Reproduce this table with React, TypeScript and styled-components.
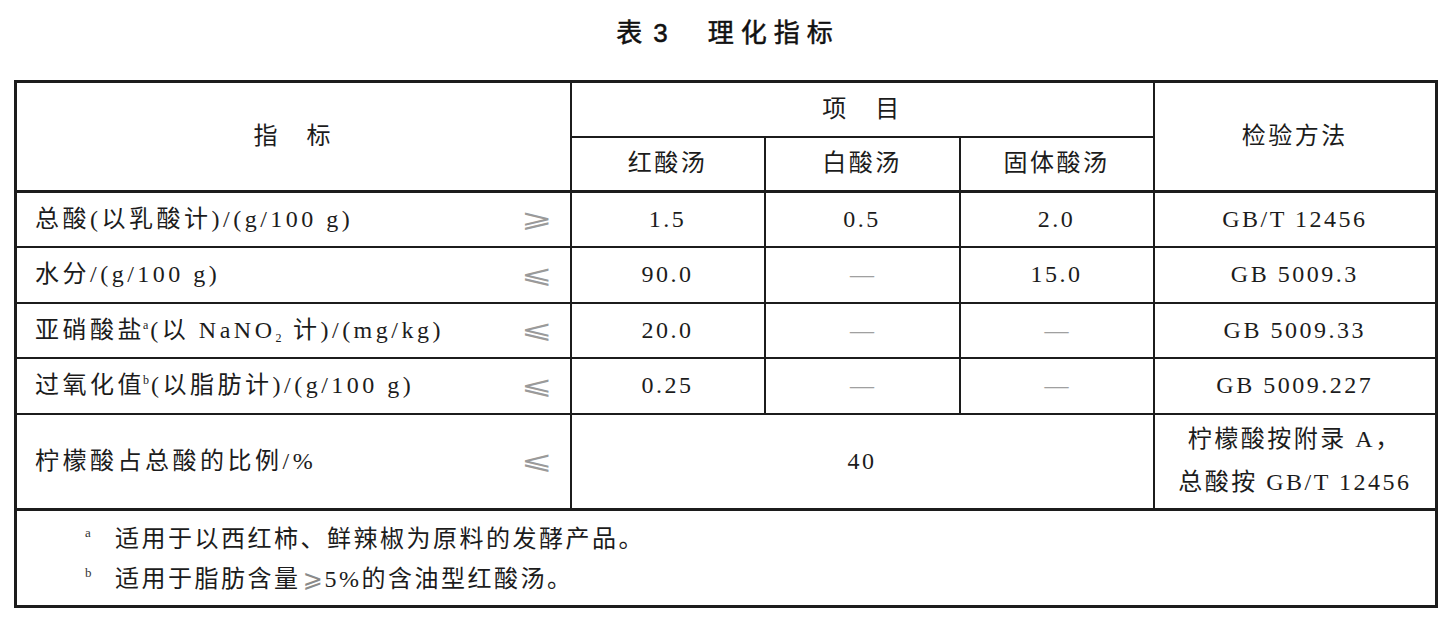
import React from "react";
import styled, { createGlobalStyle } from "styled-components";

const GlobalStyle = createGlobalStyle`
  html, body {
    margin: 0;
    padding: 0;
    background: #ffffff;
  }
  body {
    font-family: "Liberation Serif", "Noto Sans CJK SC", serif;
    color: #1c1c1c;
  }
`;

const Page = styled.div`
  width: 1452px;
  height: 630px;
  padding-left: 14px;
  box-sizing: border-box;
`;

const Title = styled.h1`
  margin: 0;
  height: 80px;
  padding: 0 17px 20px 0;
  box-sizing: border-box;
  display: flex;
  align-items: center;
  justify-content: center;
  gap: 38px;
  font-family: "Liberation Sans", "Noto Sans CJK SC", sans-serif;
  font-size: 26px;
  font-weight: 400;
  -webkit-text-stroke: 0.5px #111;
  color: #111;
`;

const TitleNo = styled.span`
  letter-spacing: 2px;
`;

const TitleText = styled.span`
  letter-spacing: 7px;
  margin-right: -7px;
`;

const Sheet = styled.table`
  width: 1421px;
  border-collapse: collapse;
  table-layout: fixed;
  border: 3px solid #1c1c1c;
  font-family: "Liberation Serif", "Noto Sans CJK SC", serif;
  font-size: 24px;
  letter-spacing: 2.5px;
  color: #1c1c1c;
`;

const Row = styled.tr<{ $h: number }>`
  height: ${(p) => p.$h}px;
`;

const Cell = styled.td<{ $heavy?: boolean; $left?: boolean }>`
  border: 2px solid #1c1c1c;
  border-bottom-width: ${(p) => (p.$heavy ? "3px" : "2px")};
  padding: 0;
  text-align: ${(p) => (p.$left ? "left" : "center")};
  vertical-align: middle;
  line-height: 1.2;
  font-family: inherit;
`;

const Indicator = styled.div`
  display: flex;
  align-items: center;
  justify-content: space-between;
  padding: 0 18px 0 18px;
  letter-spacing: 3.5px;
`;

const Compare = styled.span`
  display: inline-block;
  font-family: "DejaVu Sans", "Noto Sans CJK SC", sans-serif;
  font-size: 28px;
  font-weight: 300;
  color: #9a9a9a;
  letter-spacing: 0;
  line-height: 1;
  transform: scale(1.35, 0.9);
  transform-origin: right center;
`;

const Sup = styled.span`
  font-size: 12px;
  vertical-align: 9px;
  letter-spacing: 0;
  margin: 0 2px 0 -2px;
`;

const Sub = styled.span`
  font-size: 12px;
  vertical-align: -4px;
  letter-spacing: 0;
  margin-right: 2px;
`;

const Dash = styled.span`
  color: #a0a0a0;
  letter-spacing: 0;
`;

const MethodLines = styled.div`
  line-height: 43px;
`;

const Notes = styled.div`
  padding: 2px 0 0 68px;
  line-height: 40px;
`;

const NoteLine = styled.div`
  display: flex;
  align-items: flex-start;
`;

const Mark = styled.span`
  width: 30px;
  font-size: 13px;
  line-height: 1;
  color: #333;
  margin-top: 7px;
`;

const Ge = styled.span`
  font-family: "DejaVu Sans", sans-serif;
  color: #8a8a8a;
  letter-spacing: 0;
  margin: 0 2px;
`;

type DataRow = {
  name: React.ReactNode;
  sign: "ge" | "le";
  values: [string, string, string];
  method: string;
};

const rows: DataRow[] = [
  {
    name: <>总酸(以乳酸计)/(g/100 g)</>,
    sign: "ge",
    values: ["1.5", "0.5", "2.0"],
    method: "GB/T 12456",
  },
  {
    name: <>水分/(g/100 g)</>,
    sign: "le",
    values: ["90.0", "—", "15.0"],
    method: "GB 5009.3",
  },
  {
    name: (
      <>
        亚硝酸盐<Sup>a</Sup>(以 NaNO<Sub>2</Sub> 计)/(mg/kg)
      </>
    ),
    sign: "le",
    values: ["20.0", "—", "—"],
    method: "GB 5009.33",
  },
  {
    name: (
      <>
        过氧化值<Sup>b</Sup>(以脂肪计)/(g/100 g)
      </>
    ),
    sign: "le",
    values: ["0.25", "—", "—"],
    method: "GB 5009.227",
  },
];

const Value = ({ v }: { v: string }) => (v === "—" ? <Dash>—</Dash> : <>{v}</>);

export default function App() {
  return (
    <Page>
      <GlobalStyle />
      <Title>
        <TitleNo>表 3</TitleNo>
        <TitleText>理化指标</TitleText>
      </Title>
      <Sheet>
        <colgroup>
          <col style={{ width: 555 }} />
          <col style={{ width: 194 }} />
          <col style={{ width: 195 }} />
          <col style={{ width: 194 }} />
          <col style={{ width: 283 }} />
        </colgroup>
        <tbody>
          <Row $h={55}>
            <Cell rowSpan={2} $heavy>
              指　标
            </Cell>
            <Cell colSpan={3}>项　目</Cell>
            <Cell rowSpan={2} $heavy>
              检验方法
            </Cell>
          </Row>
          <Row $h={55}>
            <Cell $heavy>红酸汤</Cell>
            <Cell $heavy>白酸汤</Cell>
            <Cell $heavy>固体酸汤</Cell>
          </Row>
          {rows.map((r, i) => (
            <Row $h={55.5} key={i}>
              <Cell $left>
                <Indicator>
                  <span>{r.name}</span>
                  <Compare>{r.sign === "ge" ? "⩾" : "⩽"}</Compare>
                </Indicator>
              </Cell>
              {r.values.map((v, j) => (
                <Cell key={j}>
                  <Value v={v} />
                </Cell>
              ))}
              <Cell>{r.method}</Cell>
            </Row>
          ))}
          <Row $h={95.5}>
            <Cell $left $heavy>
              <Indicator>
                <span>柠檬酸占总酸的比例/%</span>
                <Compare>⩽</Compare>
              </Indicator>
            </Cell>
            <Cell colSpan={3} $heavy>
              40
            </Cell>
            <Cell $heavy>
              <MethodLines>
                <div>柠檬酸按附录 A，</div>
                <div>总酸按 GB/T 12456</div>
              </MethodLines>
            </Cell>
          </Row>
          <Row $h={97}>
            <Cell colSpan={5} $left>
              <Notes>
                <NoteLine>
                  <Mark>a</Mark>
                  <span>适用于以西红柿、鲜辣椒为原料的发酵产品。</span>
                </NoteLine>
                <NoteLine>
                  <Mark>b</Mark>
                  <span>
                    适用于脂肪含量<Ge>⩾</Ge>5%的含油型红酸汤。
                  </span>
                </NoteLine>
              </Notes>
            </Cell>
          </Row>
        </tbody>
      </Sheet>
    </Page>
  );
}
